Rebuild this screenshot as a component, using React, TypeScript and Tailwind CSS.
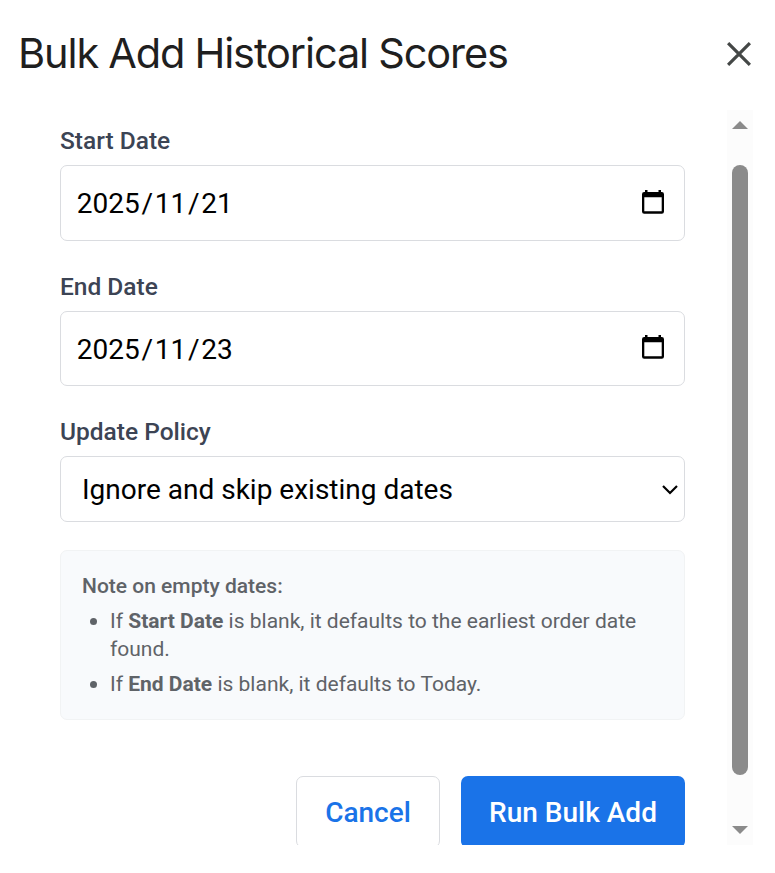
import type { ReactNode } from "react";
import { clsx } from "clsx";

type DateFieldProps = {
  label: string;
  year: string;
  month: string;
  day: string;
  className?: string;
};

function CalendarIcon() {
  return (
    <svg className="mb-[3px]" width="22" height="24" viewBox="0 0 22 24" aria-hidden="true">
      <path
        fillRule="evenodd"
        d="M3 0h2.5v2h11V0H19v2h.8A2.2 2.2 0 0 1 22 4.2v17.3a2.2 2.2 0 0 1-2.2 2.2H2.2A2.2 2.2 0 0 1 0 21.5V4.2A2.2 2.2 0 0 1 2.2 2H3zM2.3 7.3v14h17.4v-14z"
      />
    </svg>
  );
}

function FieldLabel({ text }: { text: string }) {
  return (
    <span className="h-[29px] text-[24.5px] leading-[29px] font-medium text-[#3c4454]">
      {text}
    </span>
  );
}

function DateField({ label, year, month, day, className }: DateFieldProps) {
  return (
    <div className="flex flex-col gap-[10px]">
      <FieldLabel text={label} />
      <button
        type="button"
        className={clsx(
          "flex items-center justify-between rounded-[7px] border border-[#dadce0] pr-5 pl-[14px] text-[28px] text-black",
          className
        )}
      >
        <span className="flex pt-[2px]">
          <span className="px-[1.75px]">{year}</span>/
          <span className="px-[1.75px]">{month}</span>/
          <span className="px-[1.75px]">{day}</span>
        </span>
        <CalendarIcon />
      </button>
    </div>
  );
}

function NoteItem({ children }: { children: ReactNode }) {
  return (
    <li className="flex pl-2">
      <span className="mt-[11px] mr-[13px] size-[7px] shrink-0 rounded-full bg-[#5f6368]" />
      <p>{children}</p>
    </li>
  );
}

function ScrollBar() {
  return (
    <div className="flex w-[26px] flex-col items-center bg-[#fcfcfc] pt-[11px] pb-[11px]">
      <svg width="16" height="8" viewBox="0 0 16 8" fill="#8b8b8b">
        <path d="M0 8 8 0l8 8z" />
      </svg>
      <div className="mt-9 h-[610px] w-4 rounded-full bg-[#8b8b8b]" />
      <svg className="mt-auto" width="16" height="8" viewBox="0 0 16 8" fill="#8b8b8b">
        <path d="M0 0h16L8 8z" />
      </svg>
    </div>
  );
}

export default function App() {
  return (
    <div className="flex h-[873px] w-[775px] flex-col overflow-hidden bg-white font-[Roboto,sans-serif]">
      <header className="flex h-[110px] shrink-0 items-start justify-between pt-[28px] pr-6 pl-[18px]">
        <h1 className="font-[Inter,sans-serif] text-[41.5px] leading-[50px] font-normal tracking-[-1.1px] [word-spacing:-0.5px] whitespace-nowrap text-[#1f1f1f]">
          Bulk Add Historical Scores
        </h1>
        <button type="button" aria-label="Close" className="mt-[14px]">
          <svg width="24" height="24" viewBox="0 0 24 24" stroke="#444746" strokeWidth="3.2">
            <path d="m1.1 1.1 21.8 21.8M22.9 1.1 1.1 22.9" />
          </svg>
        </button>
      </header>

      <div className="flex h-[735px] shrink-0 justify-between overflow-hidden pr-[22px] pl-[60px]">
        <main className="flex w-[625px] flex-col pt-4">
          <DateField label="Start Date" year="2025" month="11" day="21" className="h-[76px]" />
          <div className="mt-[31px] flex flex-col">
            <DateField label="End Date" year="2025" month="11" day="23" className="h-[75px]" />
          </div>

          <div className="mt-[31px] flex flex-col gap-[10px]">
            <FieldLabel text="Update Policy" />
            <button
              type="button"
              className="flex h-[66px] items-center justify-between rounded-[7px] border border-[#dadce0] pr-[6px] pl-[21px] text-[28px] text-black"
            >
              <span className="pt-[2px]">Ignore and skip existing dates</span>
              <svg className="mt-[2px]" width="16" height="10" viewBox="0 0 16 10" fill="none" stroke="#000" strokeWidth="2.2">
                <path d="m1 1 7 7 7-7" />
              </svg>
            </button>
          </div>

          <section className="mt-7 h-[170px] shrink-0 rounded-[7px] border border-[#f1f3f4] bg-[#f8fafc] px-[21px] pt-[21px] text-[21px] leading-[28px] text-[#5f6368]">
            <p className="font-medium">Note on empty dates:</p>
            <ul className="mt-[7px] flex flex-col gap-[7px]">
              <NoteItem>
                If <strong>Start Date</strong> is blank, it defaults to the earliest order date found.
              </NoteItem>
              <NoteItem>
                If <strong>End Date</strong> is blank, it defaults to Today.
              </NoteItem>
            </ul>
          </section>

          <footer className="mt-14 flex shrink-0 justify-end gap-[21px] text-[28px] font-medium">
            <button
              type="button"
              className="h-[72px] w-36 rounded-[7px] border border-[#dadce0] pt-[2px] text-[#1a73e8]"
            >
              Cancel
            </button>
            <button type="button" className="h-[72px] w-56 rounded-[7px] bg-[#1a73e8] pt-[2px] text-white">
              Run Bulk Add
            </button>
          </footer>
        </main>
        <ScrollBar />
      </div>
    </div>
  );
}
